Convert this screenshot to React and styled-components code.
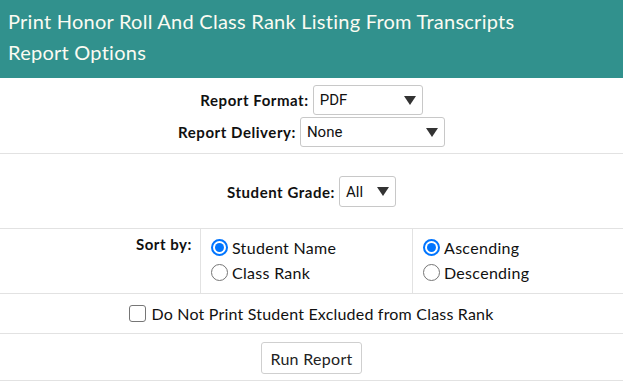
import React, { useState } from "react";
import styled, { createGlobalStyle } from "styled-components";

const GlobalStyle = createGlobalStyle`
  body {
    margin: 0;
    background: #fff;
    font-family: Lato, "Noto Sans", sans-serif;
    color: #111;
  }
`;

const Page = styled.div`
  width: 623px;
`;

const Header = styled.div`
  background-color: #31918d;
  color: #fbfbf2;
  padding: 6px 8px 10px;
  font-size: 20px;
  line-height: 31px;
  letter-spacing: 0.25px;
`;

const Section = styled.div`
  display: flex;
  flex-direction: column;
  align-items: center;
  gap: 2px;
  padding: ${(p) => p.$pad || "6px 0"};
  border-bottom: 1px solid #e2e2e2;
`;

const FieldRow = styled.div`
  display: flex;
  align-items: center;
  gap: 4px;
`;

const Label = styled.label`
  font-weight: 700;
  font-size: 15px;
  letter-spacing: 0.55px;
`;

const SelectBox = styled.div`
  position: relative;
  box-sizing: border-box;
  width: ${(p) => p.$w}px;
  height: ${(p) => p.$h || 30}px;
  border: 1px solid #c8c8c8;
  border-radius: 3px;
  display: flex;
  align-items: center;
  padding: 0 6px;
  font-family: Roboto, "Liberation Sans", sans-serif;
  font-size: 15px;
  color: #111;
  background: #fff;
`;

const Caret = styled.span`
  position: absolute;
  right: 6px;
  top: 10px;
  width: 0;
  height: 0;
  border-left: 6px solid transparent;
  border-right: 6px solid transparent;
  border-top: 9px solid #333;
`;

const SortTable = styled.div`
  display: grid;
  grid-template-columns: 201px 212px 1fr;
  border-bottom: 1px solid #e2e2e2;
  height: 64px;
`;

const SortLabel = styled.div`
  font-weight: 700;
  font-size: 15px;
  letter-spacing: 0.55px;
  text-align: right;
  padding: 6px 8px 0 0;
  border-right: 1px solid #e2e2e2;
`;

const RadioCol = styled.div`
  display: flex;
  flex-direction: column;
  gap: 4px;
  padding: 8px 0 0 10px;
  border-right: ${(p) => (p.$divider ? "1px solid #e2e2e2" : "none")};
`;

const RadioItem = styled.label`
  display: flex;
  align-items: center;
  gap: 4px;
  font-size: 16px;
  line-height: 21px;
  letter-spacing: 0.3px;
`;

const RadioDot = styled.span`
  box-sizing: border-box;
  flex: none;
  width: 17px;
  height: 17px;
  border-radius: 50%;
  border: ${(p) => (p.$on ? "2px solid #0075ff" : "1px solid #767676")};
  display: flex;
  align-items: center;
  justify-content: center;
  &::after {
    content: "";
    width: 9px;
    height: 9px;
    border-radius: 50%;
    background: ${(p) => (p.$on ? "#0075ff" : "transparent")};
  }
`;

const CheckItem = styled.label`
  display: flex;
  align-items: center;
  gap: 5px;
  font-size: 16px;
  line-height: 19px;
  letter-spacing: 0.2px;
`;

const CheckBox = styled.span`
  box-sizing: border-box;
  width: 17px;
  height: 17px;
  border: 1px solid #767676;
  border-radius: 3px;
`;

const Button = styled.button`
  font-family: Lato, "Noto Sans", sans-serif;
  font-size: 16px;
  letter-spacing: 0.3px;
  color: #222;
  background: #fff;
  border: 1px solid #cfcfcf;
  border-radius: 3px;
  height: 32px;
  padding: 0 8px;
`;

const Select = ({ value, width, height }) => (
  <SelectBox $w={width} $h={height}>
    {value}
    <Caret />
  </SelectBox>
);

export default function App() {
  const [sortBy, setSortBy] = useState("name");
  const [order, setOrder] = useState("asc");

  return (
    <Page>
      <GlobalStyle />
      <Header>
        Print Honor Roll And Class Rank Listing From Transcripts
        <br />
        Report Options
      </Header>
      <Section $pad="7px 0 6px">
        <FieldRow>
          <Label>Report Format:</Label>
          <Select value="PDF" width={110} />
        </FieldRow>
        <FieldRow>
          <Label>Report Delivery:</Label>
          <Select value="None" width={145} />
        </FieldRow>
      </Section>
      <Section $pad="22px 0 21px">
        <FieldRow>
          <Label>Student Grade:</Label>
          <Select value="All" width={57} height={31} />
        </FieldRow>
      </Section>
      <SortTable>
        <SortLabel>Sort by:</SortLabel>
        <RadioCol $divider>
          <RadioItem onClick={() => setSortBy("name")}>
            <RadioDot $on={sortBy === "name"} />
            Student Name
          </RadioItem>
          <RadioItem onClick={() => setSortBy("rank")}>
            <RadioDot $on={sortBy === "rank"} />
            Class Rank
          </RadioItem>
        </RadioCol>
        <RadioCol>
          <RadioItem onClick={() => setOrder("asc")}>
            <RadioDot $on={order === "asc"} />
            Ascending
          </RadioItem>
          <RadioItem onClick={() => setOrder("desc")}>
            <RadioDot $on={order === "desc"} />
            Descending
          </RadioItem>
        </RadioCol>
      </SortTable>
      <Section $pad="10px 0 10px">
        <CheckItem>
          <CheckBox />
          Do Not Print Student Excluded from Class Rank
        </CheckItem>
      </Section>
      <Section $pad="8px 0 6px">
        <Button>Run Report</Button>
      </Section>
    </Page>
  );
}
